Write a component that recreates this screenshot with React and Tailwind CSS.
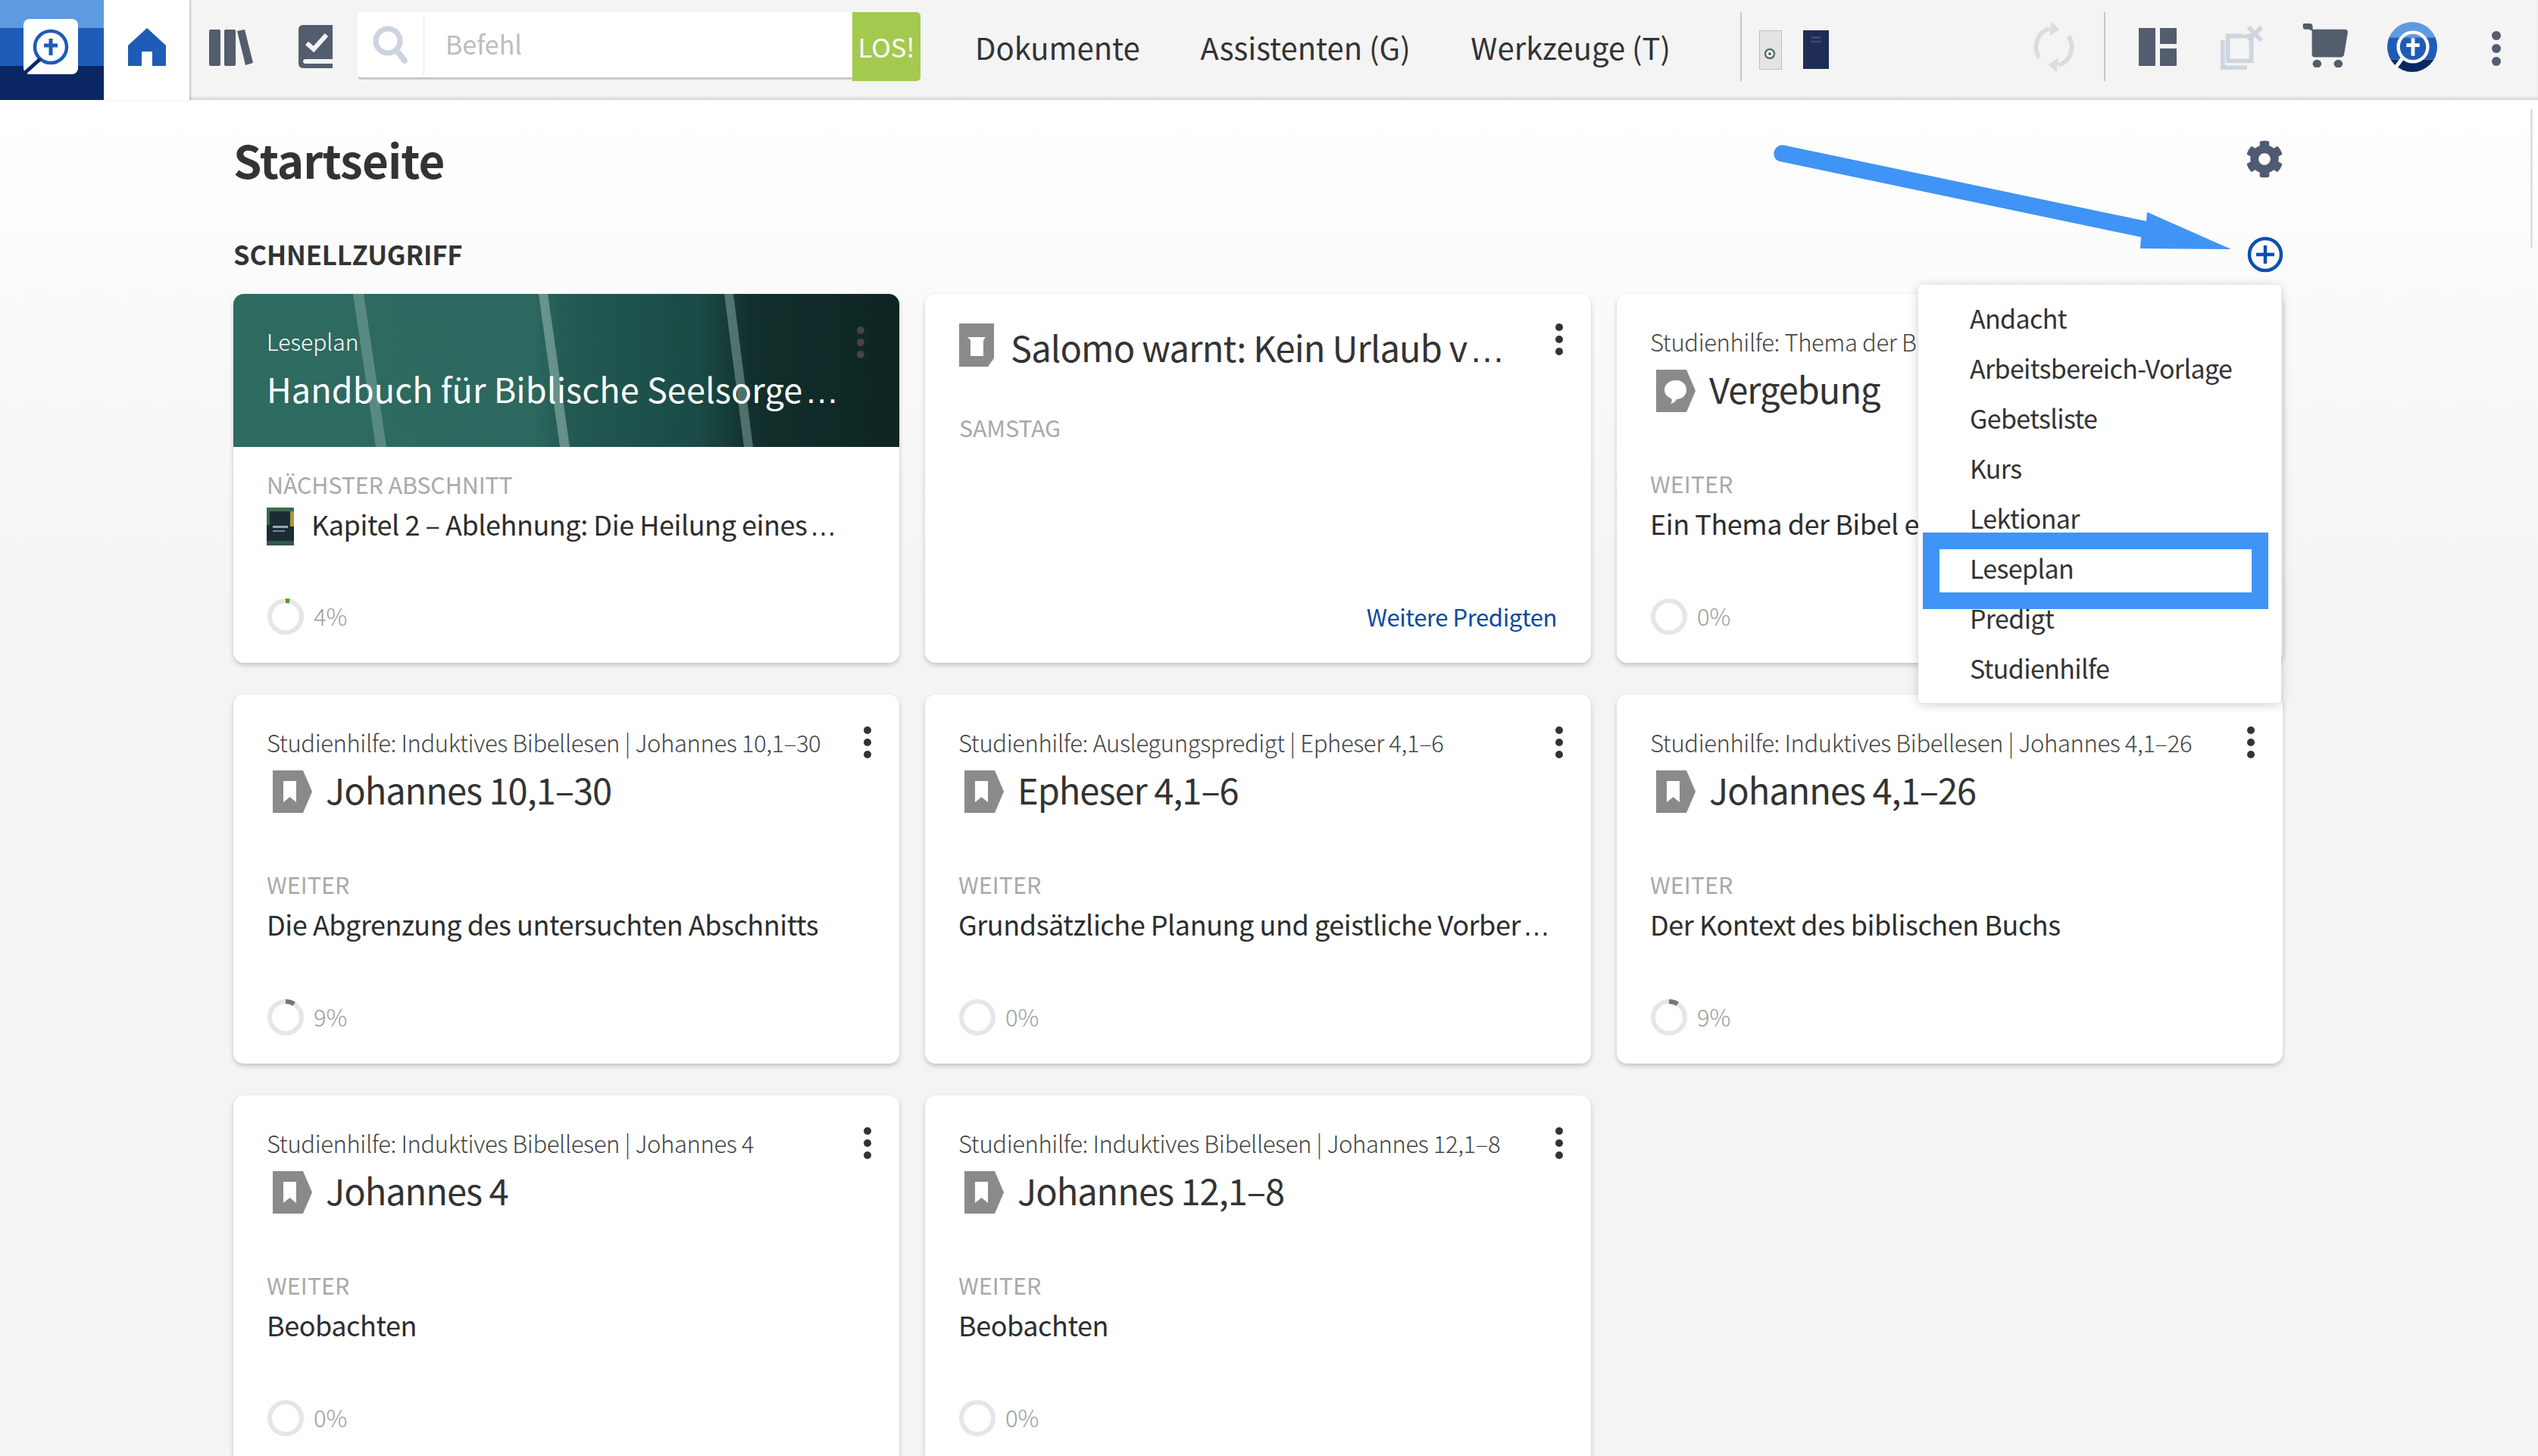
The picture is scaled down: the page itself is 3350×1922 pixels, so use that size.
import React from "react";
import { FaCog } from "react-icons/fa";

const FONT = "[font-family:'Noto_Sans_CJK_SC','Liberation_Sans',sans-serif]";

function T({ text }) {
  if (!text.endsWith("…")) return text;
  return (
    <>
      {text.slice(0, -1)}
      <span className="ml-[3px] font-['Liberation_Sans'] tracking-normal">…</span>
    </>
  );
}

function Kebab({ color = "#333" }) {
  return (
    <svg width="12" height="44" viewBox="0 0 12 44" fill={color} className="shrink-0">
      <circle cx="6" cy="6" r="5" />
      <circle cx="6" cy="22" r="5" />
      <circle cx="6" cy="38" r="5" />
    </svg>
  );
}

function Ring({ pct, color = "#777" }) {
  const r = 21;
  const c = 2 * Math.PI * r;
  return (
    <svg width="50" height="50" viewBox="0 0 50 50" className="shrink-0">
      <circle cx="25" cy="25" r={r} fill="none" stroke="#e6e6e6" strokeWidth="6" />
      {pct > 0 && (
        <circle
          cx="25"
          cy="25"
          r={r}
          fill="none"
          stroke={color}
          strokeWidth="6"
          strokeDasharray={`${(c * pct) / 100} ${c}`}
          transform="rotate(-90 25 25)"
        />
      )}
    </svg>
  );
}

function TagIcon() {
  return (
    <svg width="52" height="56" viewBox="0 0 52 56" className="shrink-0">
      <path d="M0 0H40L52 28L40 56H0Z" fill="#8a8a8a" />
      <path d="M14 14H31V42L22.5 35L14 42Z" fill="#fff" />
    </svg>
  );
}

function BubbleIcon() {
  return (
    <svg width="52" height="56" viewBox="0 0 52 56" className="shrink-0">
      <path d="M0 0H40L52 28L40 56H0Z" fill="#8a8a8a" />
      <path d="M26 14C35 14 40 20 40 27C40 34 34 39 27 39C26 42 23 44 19 45C21 42 21 40 20 38C15 36 11 32 11 27C11 20 17 14 26 14Z" fill="#fff" />
    </svg>
  );
}

function CupIcon() {
  return (
    <svg width="46" height="57" viewBox="0 0 46 57" className="shrink-0">
      <path d="M0 0H46V46L38 57H0Z" fill="#8a8a8a" />
      <path d="M11 18H35L32 22V43H15V22Z" fill="#fff" />
    </svg>
  );
}

function Progress({ pct, color }) {
  return (
    <div className="mt-auto flex items-center gap-[12px]">
      <Ring pct={pct} color={color} />
      <span className="mb-[2px] text-[31px] leading-[46px] font-light text-[#9d9d9d]">{pct}%</span>
    </div>
  );
}

function Card({ subtitle, title, icon, label, body, pct, color }) {
  return (
    <div className="relative flex h-[487px] flex-col rounded-[14px] bg-white px-[44px] pt-[44px] pb-[36px] shadow-[0_3px_6px_rgba(0,0,0,0.2)]">
      <div className="flex h-[38px] items-center justify-between">
        <span className="text-[31px] leading-[38px] font-light tracking-[-0.38px] whitespace-nowrap text-[#444]">{subtitle}</span>
        <span className="mr-[-8px] ml-[20px]">
          <Kebab />
        </span>
      </div>
      <div className="mt-[18px] flex h-[56px] items-center gap-[18px] pl-[8px]">
        {icon}
        <span className="mb-[6px] text-[47px] leading-[56px] tracking-[-1px] text-[#333]">{title}</span>
      </div>
      <div className="mt-[75px] text-[30.5px] leading-[38px] text-[#a9a9a9]">{label}</div>
      <div className="mt-[10px] text-[36px] leading-[46px] tracking-[-0.45px] whitespace-nowrap text-[#2d2d2d]">
        <T text={body} />
      </div>
      <Progress pct={pct} color={color} />
    </div>
  );
}

function ReadingCard() {
  return (
    <div className="relative flex h-[487px] flex-col overflow-hidden rounded-[14px] bg-white shadow-[0_3px_6px_rgba(0,0,0,0.2)]">
      <div className="relative h-[202px] shrink-0 bg-[linear-gradient(90deg,#2e6b61_0%,#2c685f_45%,#235a53_50%,#1a4b46_70%,#112f2c_78%,#0d2523_100%)]">
        <svg className="absolute inset-0" width="879" height="202" viewBox="0 0 879 202">
          <path d="M158 0H172L202 202H188Z" fill="#9cbcb6" opacity="0.4" />
          <path d="M403 0H415L444 202H431Z" fill="#a8c4be" opacity="0.5" />
          <path d="M648 0H660L686 202H674Z" fill="#9cbcb6" opacity="0.45" />
          <circle cx="828" cy="48" r="5" fill="#4c4240" />
          <circle cx="828" cy="64" r="5" fill="#4c4240" />
          <circle cx="828" cy="80" r="5" fill="#4c4240" />
        </svg>
        <div className="absolute top-[42px] left-[44px] text-[30px] leading-[40px] font-light text-white">Leseplan</div>
        <div className="absolute top-[96px] left-[44px] text-[45px] leading-[58px] tracking-[0.1px] whitespace-nowrap text-white">
          <T text="Handbuch für Biblische Seelsorge…" />
        </div>
      </div>
      <div className="flex flex-1 flex-col px-[44px] pt-[30px] pb-[36px]">
        <div className="text-[30.5px] leading-[38px] tracking-[-0.15px] text-[#a9a9a9]">NÄCHSTER ABSCHNITT</div>
        <div className="mt-[10px] flex items-center gap-[23px]">
          <svg width="36" height="50" viewBox="0 0 36 50" className="shrink-0">
            <rect width="36" height="50" fill="#1c2c34" />
            <rect x="0" y="0" width="36" height="5" fill="#3c6a50" />
            <rect x="31" y="5" width="5" height="20" fill="#a89a3c" />
            <rect x="0" y="5" width="4" height="18" fill="#2f6a50" />
            <rect x="8" y="24" width="20" height="3" fill="#9aa8ac" />
            <rect x="8" y="30" width="16" height="2" fill="#7a888c" />
            <rect x="0" y="44" width="36" height="6" fill="#2f5a48" />
          </svg>
          <span className="mb-[4px] text-[36px] leading-[46px] tracking-[-0.45px] whitespace-nowrap text-[#2d2d2d]">
            <T text="Kapitel 2 – Ablehnung: Die Heilung eines…" />
          </span>
        </div>
        <Progress pct={4} color="#4c9a2a" />
      </div>
    </div>
  );
}

function SermonCard() {
  return (
    <div className="relative flex h-[487px] flex-col rounded-[14px] bg-white px-[45px] pt-[39px] pb-[38px] shadow-[0_3px_6px_rgba(0,0,0,0.2)]">
      <div className="flex h-[57px] items-center gap-[22px]">
        <CupIcon />
        <span className="mt-[8px] text-[47px] leading-[60px] tracking-[-0.8px] whitespace-nowrap text-[#333]">
          <T text="Salomo warnt: Kein Urlaub v…" />
        </span>
        <span className="mr-[-9px] mb-[16px] ml-auto">
          <Kebab />
        </span>
      </div>
      <div className="mt-[61px] text-[30.5px] leading-[38px] tracking-[-0.2px] text-[#a9a9a9]">SAMSTAG</div>
      <div className="mt-auto text-right text-[31px] leading-[46px] tracking-[-0.4px] text-[#0a4a9e]">Weitere Predigten</div>
    </div>
  );
}

function Header() {
  return (
    <header className="relative z-10 flex h-[132px] items-start bg-[#f4f4f4] shadow-[inset_0_-4px_4px_-2px_rgba(0,0,0,0.16)]">
      <svg width="137" height="132" viewBox="0 0 137 132" className="shrink-0">
        <rect width="137" height="37" fill="#5d9be0" />
        <rect y="37" width="137" height="50" fill="#1f5bb8" />
        <rect y="87" width="137" height="45" fill="#0b2763" />
        <rect x="31" y="25" width="72" height="73" rx="8" fill="#fff" />
        <circle cx="67" cy="62" r="21" fill="none" stroke="#1f5bb8" strokeWidth="4.5" />
        <path d="M53 78L33 96" stroke="#0b2763" strokeWidth="5" />
        <path d="M64.5 51H69.5V57.5H76V62.5H69.5V73H64.5V62.5H58V57.5H64.5Z" fill="#1f5bb8" />
      </svg>
      <div className="flex h-[132px] w-[113px] shrink-0 items-start justify-center bg-white pt-[37px] shadow-[2px_0_2px_rgba(0,0,0,0.18)]">
        <svg width="50" height="50" viewBox="0 0 50 50">
          <path d="M25 0L50 23V50H32V31H18V50H0V23Z" fill="#1f5bb8" />
        </svg>
      </div>
      <svg width="60" height="48" viewBox="0 0 60 48" className="mt-[39px] ml-[26px] shrink-0" fill="#535d6e">
        <rect x="0" y="0" width="15" height="48" rx="2" />
        <rect x="20" y="0" width="15" height="48" rx="2" />
        <path d="M37 2L47 0L58 44L48 47Z" />
      </svg>
      <svg width="45" height="57" viewBox="0 0 45 57" className="mt-[33px] ml-[58px] shrink-0">
        <path d="M6 0H45V57H6C2 57 0 54 0 51V6C0 3 2 0 6 0Z" fill="#535d6e" />
        <path d="M11 24L20 32L37 13" fill="none" stroke="#f4f4f4" strokeWidth="6" />
        <path d="M9 45H45V51H9C5 51 5 45 9 45Z" fill="#f4f4f4" />
      </svg>
      <div className="mt-[16px] ml-[33px] flex h-[91px] w-[743px] shrink-0 items-stretch">
        <div className="flex h-[89px] w-[653px] items-center rounded-l-[5px] border-b-[3px] border-[#c8c8c8] bg-white">
          <svg width="46" height="50" viewBox="0 0 46 50" className="ml-[20px] shrink-0">
            <circle cx="20" cy="20" r="16" fill="none" stroke="#cdd3df" strokeWidth="7" />
            <path d="M31 32L42 46" stroke="#cdd3df" strokeWidth="8" strokeLinecap="round" />
          </svg>
          <div className="ml-[21px] h-[80px] w-[1px] bg-[#e6e6e6]" />
          <span className="mb-[2px] ml-[28px] text-[34px] leading-[44px] text-[#bdbdbd]">Befehl</span>
        </div>
        <div className="flex w-[90px] items-center justify-center rounded-r-[5px] bg-[#a4c94f] pb-[2px] text-[34.5px] leading-[44px] text-white">LOS!</div>
      </div>
      <nav className="mt-[36px] ml-[72px] flex w-[918px] shrink-0 items-center justify-between text-[40px] leading-[52px] text-[#333]">
        <span>Dokumente</span>
        <span>Assistenten (G)</span>
        <span>Werkzeuge (T)</span>
      </nav>
      <div className="mt-[16px] ml-[92px] h-[91px] w-[2px] shrink-0 bg-[#c6c6c6]" />
      <svg width="30" height="52" viewBox="0 0 30 52" className="mt-[40px] ml-[23px] shrink-0">
        <rect x="0.5" y="0.5" width="29" height="51" fill="#e4e4e4" stroke="#b8bfd0" />
        <circle cx="14" cy="31" r="6" fill="#fff" stroke="#4a7a6a" strokeWidth="2.5" />
        <circle cx="14" cy="31" r="2" fill="#a04a30" />
      </svg>
      <svg width="34" height="51" viewBox="0 0 34 51" className="mt-[40px] ml-[28px] shrink-0">
        <rect width="34" height="51" fill="#1f2d55" />
        <rect x="11" y="8" width="12" height="3" fill="#3d4a70" />
        <rect x="10" y="14" width="14" height="2" fill="#3d4a70" />
      </svg>
      <svg width="56" height="68" viewBox="0 0 56 70" className="mt-[28px] ml-[269px] shrink-0" fill="none" stroke="#dcdcdc" strokeWidth="6">
        <path d="M8 50C0 36 3 16 22 10" />
        <path d="M48 20C56 34 53 54 34 60" />
        <path d="M24 0L36 11L22 20Z" fill="#dcdcdc" stroke="none" />
        <path d="M32 70L20 59L34 50Z" fill="#dcdcdc" stroke="none" />
      </svg>
      <div className="mt-[16px] ml-[38px] h-[91px] w-[2px] shrink-0 bg-[#c6c6c6]" />
      <svg width="50" height="50" viewBox="0 0 50 50" className="mt-[37px] ml-[44px] shrink-0" fill="#535d6e">
        <rect x="0" y="0" width="22" height="50" />
        <rect x="28" y="0" width="22" height="21" />
        <rect x="28" y="27" width="22" height="23" />
      </svg>
      <svg width="60" height="60" viewBox="0 0 60 62" className="mt-[32px] ml-[57px] shrink-0">
        <path d="M10 16H42V50H10Z" fill="none" stroke="#cfd5e0" strokeWidth="6" />
        <path d="M0 22H6V56H36V62H0Z" fill="#cfd5e0" />
        <path d="M38 4L56 22M56 4L38 22" stroke="#cfd5e0" strokeWidth="6" />
        <rect x="30" y="10" width="6" height="4" fill="#f4f4f4" />
      </svg>
      <svg width="62" height="58" viewBox="0 0 62 60" className="mt-[31px] ml-[48px] shrink-0" fill="#535d6e">
        <path d="M2 0H10C13 0 14 2 14 4V8H58C61 8 62 10 62 12L57 42C57 44 55 46 53 46H16C14 46 13 44 13 42V10L9 8H3C0 8 0 0 2 0Z" />
        <ellipse cx="20" cy="55" rx="6" ry="5.5" />
        <ellipse cx="49" cy="55" rx="6" ry="5.5" />
      </svg>
      <svg width="68" height="68" viewBox="0 0 68 70" className="mt-[28px] ml-[50px] shrink-0">
        <defs>
          <clipPath id="lc">
            <circle cx="34" cy="35" r="34" />
          </clipPath>
        </defs>
        <g clipPath="url(#lc)">
          <rect width="68" height="22" fill="#5d9be0" />
          <rect y="22" width="68" height="30" fill="#1f5bb8" />
          <rect y="52" width="68" height="18" fill="#0b2763" />
        </g>
        <circle cx="35" cy="35" r="20" fill="none" stroke="#fff" strokeWidth="4.5" />
        <path d="M21 50L12 62" stroke="#fff" strokeWidth="5" />
        <path d="M32.5 23H37.5V30H44V35H37.5V47H32.5V35H26V30H32.5Z" fill="#fff" />
      </svg>
      <span className="mt-[40px] ml-[70px] shrink-0">
        <svg width="14" height="48" viewBox="0 0 14 48" fill="#535d6e">
          <ellipse cx="7" cy="7" rx="6" ry="6" />
          <ellipse cx="7" cy="24" rx="6" ry="6" />
          <ellipse cx="7" cy="41" rx="6" ry="6" />
        </svg>
      </span>
    </header>
  );
}

function Menu() {
  const items = ["Andacht", "Arbeitsbereich-Vorlage", "Gebetsliste", "Kurs", "Lektionar", "Leseplan", "Predigt", "Studienhilfe"];
  return (
    <div className="absolute top-[376px] left-[2532px] z-20 w-[479px] rounded-[6px] bg-white pt-[11px] pb-[13px] pl-[68px] shadow-[0_2px_14px_rgba(0,0,0,0.2)]">
      {items.map((t) => (
        <div key={t} className="h-[66px] text-[34px] leading-[66px] tracking-[-0.65px] text-[#333]">
          {t}
        </div>
      ))}
    </div>
  );
}

export default function App() {
  const pages = [
    { subtitle: "Studienhilfe: Induktives Bibellesen | Johannes 10,1–30", title: "Johannes 10,1–30", body: "Die Abgrenzung des untersuchten Abschnitts", pct: 9 },
    { subtitle: "Studienhilfe: Auslegungspredigt | Epheser 4,1–6", title: "Epheser 4,1–6", body: "Grundsätzliche Planung und geistliche Vorber…", pct: 0 },
    { subtitle: "Studienhilfe: Induktives Bibellesen | Johannes 4,1–26", title: "Johannes 4,1–26", body: "Der Kontext des biblischen Buchs", pct: 9 },
    { subtitle: "Studienhilfe: Induktives Bibellesen | Johannes 4", title: "Johannes 4", body: "Beobachten", pct: 0 },
    { subtitle: "Studienhilfe: Induktives Bibellesen | Johannes 12,1–8", title: "Johannes 12,1–8", body: "Beobachten", pct: 0 },
  ];
  return (
    <div className={`relative h-[1922px] w-[3350px] overflow-hidden bg-[#f4f4f4] ${FONT}`}>
      <Header />
      <main className="h-[1790px] w-full bg-[linear-gradient(#ffffff,#f4f4f4_650px)] pt-[38px] pl-[308px]">
        <div className="flex w-[2706px] items-center justify-between">
          <h1 className="text-[60px] leading-[80px] font-bold tracking-[-0.9px] text-[#333]">Startseite</h1>
          <FaCog className="text-[50px] text-[#4f5b70]" />
        </div>
        <div className="mt-[60px] flex w-[2706px] items-center justify-between">
          <h2 className="text-[34.5px] leading-[46px] font-bold tracking-[-0.1px] text-[#333]">SCHNELLZUGRIFF</h2>
          <svg width="48" height="48" viewBox="0 0 48 48" className="mt-[2px]">
            <circle cx="24" cy="24" r="21" fill="none" stroke="#0a4fb0" strokeWidth="4.5" />
            <path d="M24 12V36M12 24H36" stroke="#0a4fb0" strokeWidth="4.5" />
          </svg>
        </div>
        <div className="mt-[28px] grid w-[2705px] grid-cols-3 gap-x-[34px] gap-y-[42px]">
          <ReadingCard />
          <SermonCard />
          <Card
            subtitle="Studienhilfe: Thema der Bibel | Vergebung"
            title="Vergebung"
            icon={<BubbleIcon />}
            label="WEITER"
            body="Ein Thema der Bibel entdecken"
            pct={0}
          />
          {pages.map((p) => (
            <Card key={p.title} {...p} icon={<TagIcon />} label="WEITER" />
          ))}
        </div>
      </main>
      <Menu />
      <div className="absolute top-[703px] left-[2538px] z-30 h-[101px] w-[456px] border-[22px] border-[#3f94f5]" />
      <svg className="absolute top-[180px] left-[2330px] z-30" width="630" height="160" viewBox="0 0 630 160">
        <path d="M26 12L503 112L504 100L615 149L495 148L496 133L19 33C5 29 12 8 26 12Z" fill="#3f94f5" />
      </svg>
      <div className="absolute top-[144px] left-[3340px] z-30 h-[184px] w-[3px] bg-[#e0e0e0]" />
    </div>
  );
}
